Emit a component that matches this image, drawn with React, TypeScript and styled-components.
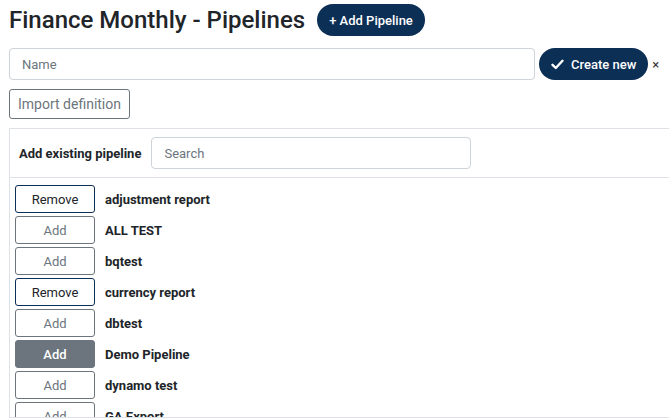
import styled, { createGlobalStyle } from 'styled-components';

const navy = '#0c2f56';
const gray = '#6c757d';
const line = '#dee2e6';

const GlobalStyle = createGlobalStyle`
	* {
		box-sizing: border-box;
	}
	body {
		margin: 0;
		font-family: Roboto, 'Liberation Sans', sans-serif;
		color: #212529;
		background: #fff;
		overflow: hidden;
	}
`;

export const PageStyled = styled.div`
	padding: 4px 0 0 9px;
	width: 669px;
	height: 419px;
	overflow: hidden;
`;
export const HeaderStyled = styled.div`
	display: flex;
	align-items: center;
	gap: 12px;
	h1 {
		margin: 0;
		font-size: 24px;
		font-weight: 500;
		line-height: 28px;
	}
`;
export const PillButton = styled.button`
	display: inline-flex;
	align-items: center;
	gap: 7px;
	height: 32px;
	padding: 0 12px;
	border: none;
	border-radius: 16px;
	background: ${navy};
	color: #fff;
	font-family: inherit;
	font-size: 13px;
	font-weight: 500;
	white-space: nowrap;
`;
export const CreateRowStyled = styled.div`
	display: flex;
	align-items: center;
	margin-top: 12px;
	gap: 4px;
`;
export const TextInput = styled.input<{ $width: number }>`
	width: ${(p) => p.$width}px;
	height: 32px;
	padding: 0 12px;
	border: 1px solid #ced4da;
	border-radius: 4px;
	font-family: inherit;
	font-size: 13px;
	color: #212529;
	&::placeholder {
		color: ${gray};
	}
`;
export const CloseStyled = styled.span`
	font-size: 13px;
	color: #333;
`;
export const OutlineButton = styled.button`
	margin-top: 9px;
	height: 30px;
	padding: 0 8px;
	border: 1px solid ${gray};
	border-radius: 3px;
	background: #fff;
	color: ${gray};
	font-family: inherit;
	font-size: 14px;
`;
export const PanelStyled = styled.div`
	margin-top: 9px;
	border: 1px solid ${line};
	border-right: none;
	height: 290px;
	overflow: hidden;
	display: flex;
	flex-direction: column;
`;
export const PanelHeader = styled.div`
	display: flex;
	align-items: center;
	gap: 10px;
	padding: 8px 9px;
	border-bottom: 1px solid ${line};
	label {
		font-size: 13px;
		font-weight: 700;
	}
`;
export const ListStyled = styled.div`
	display: flex;
	flex-direction: column;
	gap: 3px;
	padding: 7px 5px;
`;
export const RowStyled = styled.div`
	display: flex;
	align-items: center;
	gap: 10px;
	span {
		font-size: 13px;
		font-weight: 700;
	}
`;
export const ToggleButton = styled.button<{ $mode: 'remove' | 'add' | 'active' }>`
	width: 80px;
	height: 28px;
	flex-shrink: 0;
	border-radius: 3px;
	font-family: inherit;
	font-size: 13px;
	border: 1px solid ${(p) => (p.$mode === 'remove' ? navy : gray)};
	background: ${(p) => (p.$mode === 'active' ? gray : '#fff')};
	color: ${(p) => (p.$mode === 'remove' ? '#212529' : p.$mode === 'active' ? '#fff' : gray)};
	font-weight: ${(p) => (p.$mode === 'active' ? 500 : 400)};
`;

type Pipeline = { name: string; mode: 'remove' | 'add' | 'active' };

const pipelines: Pipeline[] = [
	{ name: 'adjustment report', mode: 'remove' },
	{ name: 'ALL TEST', mode: 'add' },
	{ name: 'bqtest', mode: 'add' },
	{ name: 'currency report', mode: 'remove' },
	{ name: 'dbtest', mode: 'add' },
	{ name: 'Demo Pipeline', mode: 'active' },
	{ name: 'dynamo test', mode: 'add' },
	{ name: 'GA Export', mode: 'add' },
	{ name: 'gsheet test', mode: 'add' },
];

const CheckIcon = () => (
	<svg width='13' height='11' viewBox='0 0 13 11'>
		<path d='M1.5 5.8 L4.8 9 L11.5 1.8' fill='none' stroke='#fff' strokeWidth='2.4' strokeLinecap='round' strokeLinejoin='round' />
	</svg>
);

const App = () => {
	return (
		<>
			<GlobalStyle />
			<PageStyled>
				<HeaderStyled>
					<h1>Finance Monthly - Pipelines</h1>
					<PillButton>+ Add Pipeline</PillButton>
				</HeaderStyled>
				<CreateRowStyled>
					<TextInput $width={526} placeholder='Name' />
					<PillButton>
						<CheckIcon />
						Create new
					</PillButton>
					<CloseStyled>×</CloseStyled>
				</CreateRowStyled>
				<OutlineButton>Import definition</OutlineButton>
				<PanelStyled>
					<PanelHeader>
						<label>Add existing pipeline</label>
						<TextInput $width={320} placeholder='Search' />
					</PanelHeader>
					<ListStyled>
						{pipelines.map((item) => (
							<RowStyled key={item.name}>
								<ToggleButton $mode={item.mode}>
									{item.mode === 'remove' ? 'Remove' : 'Add'}
								</ToggleButton>
								<span>{item.name}</span>
							</RowStyled>
						))}
					</ListStyled>
				</PanelStyled>
			</PageStyled>
		</>
	);
};
export default App;
